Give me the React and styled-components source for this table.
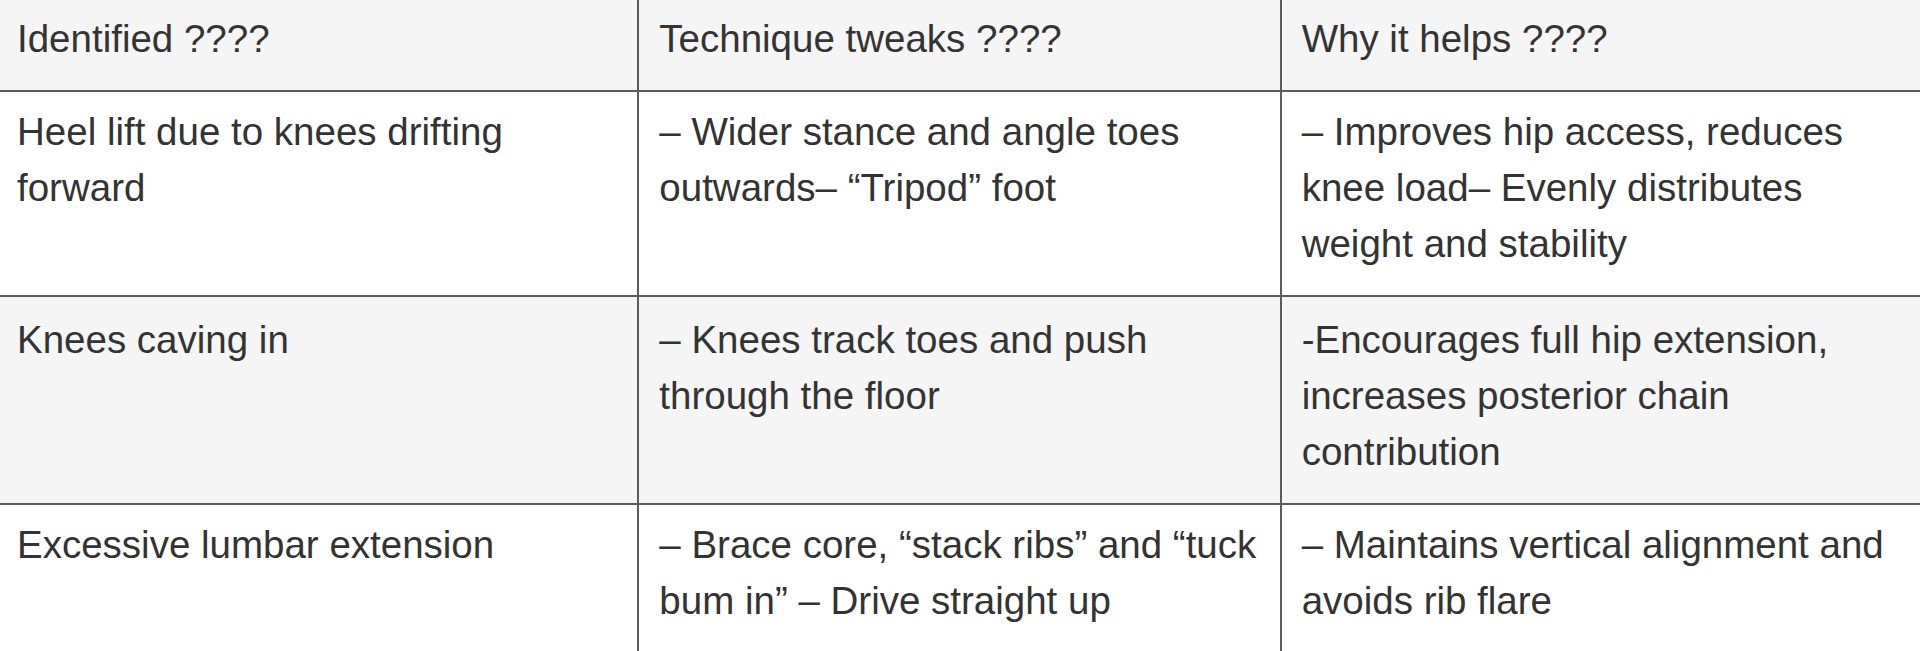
import React from "react";
import styled, { createGlobalStyle } from "styled-components";

const GlobalStyle = createGlobalStyle`
  html, body {
    margin: 0;
    padding: 0;
    background: #fff;
    overflow: hidden;
  }
`;

// 2번째 줄은 원본에서 살짝 아래로 밀려 있어서 extra 값으로 보정
const rows = [
  {
    issue: "Heel lift due to knees drifting forward",
    tweak: "– Wider stance and angle toes outwards– “Tripod” foot",
    why: "– Improves hip access, reduces knee load– Evenly distributes weight and stability",
    extra: 0,
  },
  {
    issue: "Knees caving in",
    tweak: "– Knees track toes and push through the floor",
    why: "-Encourages full hip extension, increases posterior chain contribution",
    extra: 3,
  },
  {
    issue: "Excessive lumbar extension",
    tweak: "– Brace core, “stack ribs” and “tuck bum in” – Drive straight up",
    why: "– Maintains vertical alignment and avoids rib flare",
    extra: 0,
  },
];

const App = () => {
  return (
    <>
      <GlobalStyle />
      <Table>
        <thead>
          <Row $shaded>
            <HeadCell>Identified ????</HeadCell>
            <HeadCell>Technique tweaks ????</HeadCell>
            <HeadCell>Why it helps ????</HeadCell>
          </Row>
        </thead>
        <tbody>
          {rows.map((row, idx) => (
            <Row key={idx} $shaded={idx % 2 === 1}>
              <Cell $extra={row.extra}>{row.issue}</Cell>
              <Cell $extra={row.extra}>{row.tweak}</Cell>
              <Cell $extra={row.extra}>{row.why}</Cell>
            </Row>
          ))}
        </tbody>
      </Table>
    </>
  );
};

export default App;

const Table = styled.table`
  width: 1929px;
  margin-left: -5px;
  border-collapse: collapse;
  table-layout: fixed;
  font-family: "Liberation Sans", Arial, sans-serif;
  font-size: 38.5px;
  line-height: 56px;
  color: #333;
`;

const Row = styled.tr`
  background-color: ${(props) => (props.$shaded ? "#f5f5f5" : "#fff")};
`;

const HeadCell = styled.th`
  text-align: left;
  font-weight: 400;
  vertical-align: top;
  padding: 11px 20px 23px;
  border: 2px solid #5c5c5c;
  border-top: none;
`;

const Cell = styled.td`
  vertical-align: top;
  padding: ${(props) => 12 + props.$extra}px 20px 23px;
  border: 2px solid #5c5c5c;

  tr:last-child > & {
    border-bottom: none;
  }
`;
